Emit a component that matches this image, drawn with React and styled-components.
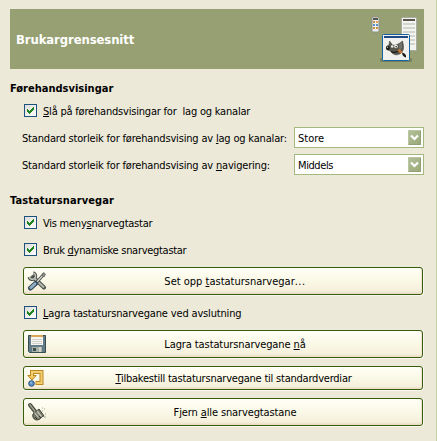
import React from "react";
import styled, { createGlobalStyle } from "styled-components";

const GlobalStyle = createGlobalStyle`
  * { box-sizing: border-box; }
  body {
    margin: 0;
    background: #ece9d8;
    overflow: hidden;
    color: #000;
    font: 11px/14px "DejaVu Sans Condensed", "DejaVu Sans", sans-serif;
    font-stretch: condensed;
  }
`;

const Page = styled.main`
  width: 437px;
  height: 441px;
  padding: 9px 12px 0 10px;
  border-right: 1px solid #c5d3a0;
  background: #ece9d8;
`;

const Banner = styled.header`
  display: flex;
  align-items: center;
  justify-content: space-between;
  width: 414px;
  height: 60px;
  padding: 0 7px 0 6px;
  background: #96a072;
  color: #fff;
`;

const Title = styled.h1`
  margin: 0;
  padding-top: 1px;
  font-size: 13px;
  line-height: 16px;
  font-weight: bold;
  white-space: nowrap;
  letter-spacing: -0.12px;
`;

const Heading = styled.h2`
  margin: ${(p) => p.$top}px 0 0;
  height: 14px;
  font-size: 11px;
  line-height: 14px;
  font-weight: bold;
  letter-spacing: ${(p) => p.$track || 0}px;
`;

const Label = styled.span`
  padding-top: 2px;
  white-space: pre;
  letter-spacing: ${(p) => p.$track || 0}px;
`;

const Key = styled.span`
  text-decoration: underline;
  text-decoration-thickness: 1px;
  text-underline-offset: 1px;
`;

const Dots = styled.span`
  letter-spacing: 0.5px;
`;

const CheckRow = styled.label`
  display: flex;
  align-items: center;
  gap: 6px;
  height: 13px;
  margin: ${(p) => p.$top}px 0 0 14px;
`;

const Box = styled.span`
  display: flex;
  flex: none;
  width: 13px;
  height: 13px;
  border: 1px solid #1c5180;
  background: linear-gradient(135deg, #dcdcd7, #fff);
`;

const SelectRow = styled.div`
  display: flex;
  align-items: center;
  justify-content: space-between;
  width: 402px;
  height: 21px;
  margin: ${(p) => p.$top}px 0 0 12px;
`;

const Combo = styled.div`
  display: flex;
  flex: none;
  align-items: center;
  justify-content: space-between;
  width: 130px;
  height: 21px;
  padding: 0 2px 0 3px;
  border: 1px solid #a4b97f;
  background: #fff;
`;

const Arrow = styled.span`
  display: flex;
  width: 13px;
  height: 15px;
  border: 1px solid #93a075;
  border-top-color: #bac6a1;
  border-left-color: #bac6a1;
  border-radius: 1px;
  background: linear-gradient(135deg, #b2bf98, #9aaa78);
`;

const Button = styled.button`
  display: grid;
  grid-template-columns: ${(p) => p.$iconCell || 24}px 1fr;
  align-items: center;
  width: 400px;
  height: ${(p) => p.$height || 28}px;
  margin: ${(p) => p.$top}px 0 0 13px;
  padding: 0 3px;
  border: 1px solid #375e0c;
  border-radius: 3px;
  background: linear-gradient(#fffff6, #faf8e6 50%, #f5f0dc 88%, #ead9c1);
  box-shadow: 0 1px 0 #f8f6ee, 1px 0 0 #f8f6ee, inset -1px 0 0 #eee5cd;
  color: #000;
  font: inherit;
  text-align: center;
`;

const Icon = styled.svg`
  display: block;
  flex: none;
`;

const Tick = () => (
  <Box>
    <Icon width="11" height="11" viewBox="0 0 11 11" shapeRendering="crispEdges">
      <path fill="#218221" d="M2 4h1v3H2zM3 5h1v3H3zM4 6h1v3H4zM5 5h1v3H5zM6 4h1v3H6zM7 3h1v3H7zM8 2h1v3H8z" />
    </Icon>
  </Box>
);

const Check = ({ top, track, children }) => (
  <CheckRow $top={top}>
    <Tick />
    <Label $track={track}>{children}</Label>
  </CheckRow>
);

const Select = ({ value, track }) => (
  <Combo>
    <Label $track={track}>{value}</Label>
    <Arrow>
      <Icon width="11" height="13" viewBox="0 0 11 13">
        <path d="M2 4.5 5.5 8 9 4.5" fill="none" stroke="#fff" strokeWidth="2.2" />
      </Icon>
    </Arrow>
  </Combo>
);

const InterfaceIcon = () => (
  <Icon width="48" height="48" viewBox="0 0 48 48">
    <g transform="translate(.5 .5)">
      <rect x="2.5" y="1.5" width="7" height="15" rx="1" fill="#eee" stroke="#8d9085" />
      <path d="M3.5 2.5h5v2h-5z" fill="#555750" />
      <path d="M3.5 5.5h2v2h-2zM6.5 11.5h2v2h-2zM3.5 11.5h2v2h-2z" fill="#c69042" />
      <path d="M6.5 5.5h2v2h-2z" fill="#e9a150" />
      <path d="M3.5 8.5h2v2h-2zM6.5 8.5h2v2h-2z" fill="#5b91c7" />
    </g>
    <rect x="32.5" y="2.5" width="15" height="33" rx="1" fill="#f3f3f0" stroke="#a9aaa2" />
    <path d="M34 4h12v2H34z" fill="#595650" />
    <path d="M34 8h12v2H34zM34 12h12v2H34zM34 16h12v2H34zM34 20h12v2H34zM34 24h12v2H34zM34 28h12v2H34z" fill="#d2d4ce" />
    <rect x="11" y="43" width="32" height="4" rx="2" fill="#687052" opacity=".7" />
    <rect x="13.5" y="19.5" width="27" height="26" rx="1" fill="#f0f0ed" stroke="#1263a0" />
    <path d="M15 21h24v2H15z" fill="#204a87" />
    <path d="M20.5 26l3 4c3 1 6-1 10-4 1 4 2 8-.5 11-2 3-7 4-10 1-1-2-2-2-4-3-2 0-2-3-1-4l2-1z" fill="#56564d" stroke="#3c3c36" strokeWidth=".5" />
    <path d="M30 29l3-2v6l-3 3z" fill="#74736a" />
    <ellipse cx="19" cy="33" rx="1.8" ry="2.2" fill="#181815" />
    <circle cx="18.6" cy="32.2" r=".6" fill="#d8d8d5" />
    <circle cx="23.2" cy="31.5" r="1.3" fill="#ecece8" />
    <circle cx="27" cy="31.5" r="1.8" fill="#f5f5f2" />
    <circle cx="27.2" cy="31.7" r=".8" fill="#111" />
    <path d="M22 36.5c3 1.5 6 .5 8-1" fill="none" stroke="#1e1e1a" strokeWidth="1.2" />
    <path d="M28 35l3-.5 2.5 2.5-2 1.5z" fill="#cf752c" />
    <path d="M33 37.5c3 .5 4.5 2.5 4 5-2-.5-4-2-4-5z" fill="#191917" />
  </Icon>
);

const ToolsIcon = () => (
  <Icon width="20" height="20" viewBox="0 0 20 20">
    <path d="M6 6l11 10.5" stroke="#4b5048" strokeWidth="4" strokeLinecap="round" />
    <path d="M6.2 1.8A3.4 3.4 0 1 1 2 6" fill="none" stroke="#4b5048" strokeWidth="3.2" />
    <path d="M6.2 2A3.2 3.2 0 1 1 2.3 6" fill="none" stroke="#c3c7bd" strokeWidth="1.4" />
    <path d="M7 7l10 9.5" stroke="#b9bdb3" strokeWidth="1.8" />
    <path d="M17 3l-8 9" stroke="#454944" strokeWidth="3" />
    <path d="M17 3l-8 9" stroke="#d9ddd4" strokeWidth="1.2" />
    <path d="M16.5 1.5l2 1.5-1.5 3-2-1.5z" fill="#8d938a" stroke="#4b5048" strokeWidth=".6" />
    <path d="M8.5 12.5l-5 4.5" stroke="#35495b" strokeWidth="5" strokeLinecap="round" />
    <path d="M8 12.8l-4.2 3.8" stroke="#90aec2" strokeWidth="2.8" strokeLinecap="round" />
  </Icon>
);

const FloppyIcon = () => (
  <Icon width="20" height="20" viewBox="0 0 20 20">
    <path d="M1.5 1.5h17v17h-16l-1-1z" fill="#647c87" stroke="#374d50" />
    <path d="M4 1h12v10H4z" fill="#f6f5ef" />
    <path d="M4 1h12v2H4z" fill="#dba757" />
    <path d="M5 5.5h10M5 7.5h10M5 9.5h10" stroke="#c7c9c2" strokeWidth=".8" />
    <path d="M5 13h10v5H5z" fill="#a8b1aa" />
    <path d="M6 14h3v3H6z" fill="#3e4e4b" />
    <path d="M12 13h2v5h-2z" fill="#d3d4c7" />
  </Icon>
);

const ResetIcon = () => (
  <Icon width="18" height="18" viewBox="0 0 18 18">
    <path d="M5 8V3h9.5v11H8.5" fill="none" stroke="#bd8722" strokeWidth="4" />
    <path d="M.8 6.5h8.4L5 11z" fill="#f0c45c" stroke="#bd8722" />
    <path d="M5 8V3h9.5v11H9.3" fill="none" stroke="#f4cf70" strokeWidth="2" />
    <circle cx="4.5" cy="14.5" r="2.8" fill="#5f91c5" stroke="#274c7b" />
    <circle cx="4" cy="13.7" r="1" fill="#94bbe0" />
  </Icon>
);

const BrushIcon = () => (
  <Icon width="20" height="20" viewBox="0 0 20 20">
    <path d="M3 3l5.5 7" stroke="#414538" strokeWidth="4" strokeLinecap="round" />
    <path d="M3 3l5.5 7" stroke="#9a9e90" strokeWidth="1.8" strokeLinecap="round" />
    <path d="M6 12l6-5 5 7c-3 0-3 4-7 4-3 0-5-3-4-6z" fill="#77796a" stroke="#3e4337" />
    <path d="M7.5 10.5l4 5M10 9l4.5 5.5" stroke="#c9cbbb" strokeWidth="1.2" />
    <path d="M8 15l2 2M12 14l2 2" stroke="#33372d" />
    <path d="M15 9h1M17 7h1M18 12h1M15 6h1M17 15h2" stroke="#a5a696" />
  </Icon>
);

export default function App() {
  return (
    <>
      <GlobalStyle />
      <Page>
        <Banner>
          <Title>Brukargrensesnitt</Title>
          <InterfaceIcon />
        </Banner>
        <Heading $top={13}>Førehandsvisingar</Heading>
        <Check top={8} track={-0.2}><Key>S</Key>lå på førehandsvisingar for  lag og kanalar</Check>
        <SelectRow $top={10}>
          <Label $track={-0.18}>Standard storleik for førehandsvising av <Key>l</Key>ag og kanalar:</Label>
          <Select value="Store" />
        </SelectRow>
        <SelectRow $top={6}>
          <Label $track={-0.18}>Standard storleik for førehandsvising av <Key>n</Key>avigering:</Label>
          <Select value="Middels" track={-0.4} />
        </SelectRow>
        <Heading $top={19} $track={0.1}>Tastatursnarvegar</Heading>
        <Check top={8} track={-0.24}>Vis meny<Key>s</Key>narvegtastar</Check>
        <Check top={14} track={-0.29}>Bruk <Key>d</Key>ynamiske snarvegtastar</Check>
        <Button $top={11}>
          <ToolsIcon />
          <Label>Set opp <Key>t</Key>astatursnarvegar<Dots>...</Dots></Label>
        </Button>
        <Check top={11} track={-0.16}><Key>L</Key>agra tastatursnarvegane ved avslutning</Check>
        <Button $top={11}>
          <FloppyIcon />
          <Label $track={-0.1}>Lagra tastatursnarvegane <Key>n</Key>å</Label>
        </Button>
        <Button $top={8} $height={24} $iconCell={21}>
          <ResetIcon />
          <Label $track={-0.22}><Key>T</Key>ilbakestill tastatursnarvegane til standardverdiar</Label>
        </Button>
        <Button $top={8}>
          <BrushIcon />
          <Label $track={-0.12}>Fjern <Key>a</Key>lle snarvegtastane</Label>
        </Button>
      </Page>
    </>
  );
}
